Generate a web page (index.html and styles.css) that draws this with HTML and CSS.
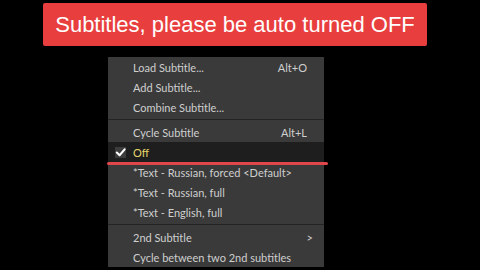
FILE: index.html
```html
<!DOCTYPE html>
<html>
<head>
<meta charset="utf-8">
<link rel="stylesheet" href="styles.css">
</head>
<body>
<div class="banner">Subtitles, please be auto turned OFF</div>
<div class="menu">
  <div class="item"><span class="label">Load Subtitle...</span><span class="key">Alt+O</span></div>
  <div class="item"><span class="label">Add Subtitle...</span></div>
  <div class="item"><span class="label">Combine Subtitle...</span></div>
  <div class="sep"></div>
  <div class="item"><span class="label">Cycle Subtitle</span><span class="key">Alt+L</span></div>
  <div class="item active">
    <span class="check"><svg width="12" height="11" viewBox="0 0 12 11"><path d="M2 5.5 L5 8.5 L10.5 2" fill="none" stroke="#ffffff" stroke-width="2.2" stroke-linecap="round" stroke-linejoin="round"/></svg></span>
    <span class="label">Off</span>
    <span class="underline"></span>
  </div>
  <div class="item"><span class="label">*Text - Russian, forced &lt;Default&gt;</span></div>
  <div class="item"><span class="label">*Text - Russian, full</span></div>
  <div class="item"><span class="label">*Text - English, full</span></div>
  <div class="sep"></div>
  <div class="item"><span class="label">2nd Subtitle</span><span class="key arrow">&gt;</span></div>
  <div class="item"><span class="label">Cycle between two 2nd subtitles</span></div>
</div>
</body>
</html>
```
FILE: styles.css
```css
html, body {
  margin: 0;
  padding: 0;
  background: #000;
  width: 480px;
  height: 270px;
  overflow: hidden;
}
.banner {
  margin: 3px 0 0 43px;
  width: 384px;
  height: 43px;
  background: #e83e3e;
  border-radius: 2px;
  color: #fff;
  font-family: "Liberation Sans", Arial, sans-serif;
  font-size: 22px;
  display: flex;
  align-items: center;
  justify-content: center;
}
.menu {
  margin: 11px 0 0 108px;
  width: 216px;
  background: #3a3a3a;
  font-family: Lato, sans-serif;
  font-size: 11px;
  color: #cfcfcf;
}
.item {
  position: relative;
  height: 20px;
  display: flex;
  align-items: center;
  padding: 0 17px 0 25px;
}
.label { flex: 1; }
.key { color: #cfcfcf; }
.arrow { margin-right: -6px; }
.sep {
  height: 5px;
  display: flex;
  align-items: center;
}
.sep::before {
  content: "";
  flex: 1;
  height: 1px;
  background: #242424;
}
.item.active {
  background: #1e1e1e;
  color: #e6d66a;
}
.check {
  position: absolute;
  left: 7px;
  top: 5px;
  width: 11px;
  height: 11px;
  background: #3c3c3c;
  display: flex;
  align-items: center;
  justify-content: center;
}
.underline {
  position: absolute;
  left: -1px;
  right: -4px;
  bottom: -3px;
  height: 3px;
  border-radius: 2px;
  background: #e0474b;
}
```
